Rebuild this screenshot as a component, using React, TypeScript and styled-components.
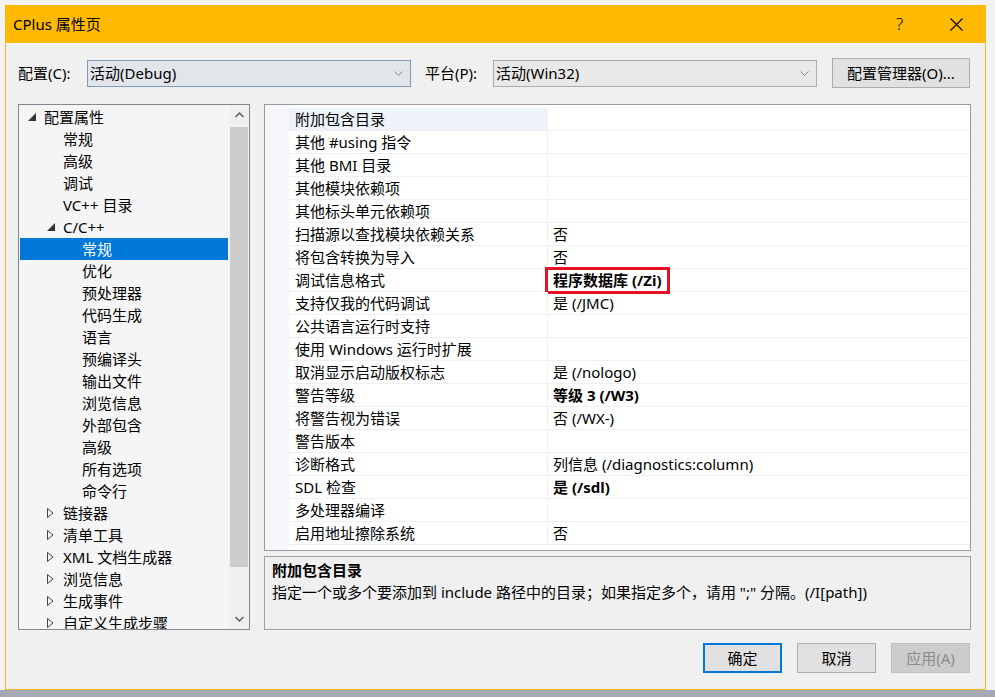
import React from 'react'
import styled, { createGlobalStyle } from 'styled-components'

const GlobalStyle = createGlobalStyle`
  html, body {
    margin: 0;
    padding: 0;
  }
  body {
    font-family: "Noto Sans", "Noto Sans CJK SC", sans-serif;
    font-size: 15px;
    color: #000;
    background: #f2f2f2;
  }
  * {
    box-sizing: border-box;
  }
`

const Screen = styled.div`
  width: 995px;
  height: 697px;
  padding: 5px 0 0 5px;
  overflow: hidden;
  background: linear-gradient(to bottom, #f2f2f2 0, #f2f2f2 690px, #a4a8b2 690px);
`

const Dialog = styled.div`
  width: 981px;
  height: 685px;
  border: 1px solid #f4b81c;
  border-top: none;
  background: #f0f0f0;
  display: flex;
  flex-direction: column;
`

const TitleBar = styled.div`
  height: 38px;
  flex-shrink: 0;
  background: #ffb900;
  display: flex;
  align-items: center;
  padding-left: 7px;
`

const Title = styled.div`
  flex: 1;
  font-size: 15px;
  line-height: 20px;
`

const TitleButton = styled.div`
  width: 57px;
  height: 38px;
  display: flex;
  align-items: center;
  justify-content: center;
  font-size: 17px;
  font-weight: 300;
  line-height: 20px;
`

const Content = styled.div`
  flex: 1;
  display: flex;
  flex-direction: column;
  padding: 15px 14px 0 12px;
`

const ConfigRow = styled.div`
  height: 30px;
  display: flex;
  align-items: center;
`

const FieldLabel = styled.div<{ $w: number; $ml?: number }>`
  width: ${(p) => p.$w}px;
  margin-left: ${(p) => p.$ml || 0}px;
  line-height: 20px;
`

const ComboBox = styled.div<{ $focused?: boolean }>`
  width: 324px;
  height: 27px;
  display: flex;
  align-items: center;
  justify-content: space-between;
  padding: 0 7px 0 2px;
  border: 1px solid ${(p) => (p.$focused ? '#7d9cbd' : '#acacac')};
  background: ${(p) => (p.$focused ? '#e2e6eb' : '#e8e8e8')};
  line-height: 20px;
`

const PushButton = styled.div<{ $w: number; $default?: boolean; $disabled?: boolean }>`
  width: ${(p) => p.$w}px;
  height: 30px;
  flex-shrink: 0;
  display: flex;
  align-items: center;
  justify-content: center;
  line-height: 20px;
  background: ${(p) => (p.$disabled ? '#cccccc' : '#e1e1e1')};
  color: ${(p) => (p.$disabled ? '#8a8a8a' : '#000')};
  border: ${(p) => (p.$default ? '2px solid #0078d7' : p.$disabled ? '1px solid #bfbfbf' : '1px solid #adadad')};
`

const ManagerButton = styled(PushButton)`
  margin-left: 15px;
`

const Main = styled.div`
  height: 526px;
  margin-top: 16px;
  display: flex;
  gap: 14px;
`

const Tree = styled.div`
  width: 232px;
  border: 1px solid #828790;
  background: #f5f5f5;
  display: flex;
`

const TreeList = styled.div`
  flex: 1;
  padding: 1px 1px 0;
  overflow: hidden;
`

const TreeRow = styled.div<{ $level: number; $selected?: boolean }>`
  height: 22px;
  display: flex;
  align-items: center;
  padding-left: ${(p) => 8 + p.$level * 19}px;
  line-height: 20px;
  white-space: nowrap;
  background: ${(p) => (p.$selected ? '#0078d7' : 'transparent')};
  color: ${(p) => (p.$selected ? '#fff' : '#000')};
`

const Toggle = styled.span`
  width: 16px;
  height: 22px;
  flex-shrink: 0;
  display: flex;
  align-items: center;
`

const ScrollBar = styled.div`
  width: 20px;
  display: flex;
  flex-direction: column;
  background: #f0f0f0;
`

const ScrollArrow = styled.div`
  height: 20px;
  display: flex;
  align-items: center;
  justify-content: center;
`

const ScrollTrack = styled.div`
  flex: 1;
  padding: 2px 1px 0 1px;
`

const ScrollThumb = styled.div`
  height: 440px;
  background: #cdcdcd;
`

const RightCol = styled.div`
  width: 707px;
  display: flex;
  flex-direction: column;
  gap: 5px;
`

const PropGrid = styled.div`
  height: 447px;
  border: 1px solid #9a9a9a;
  background: #fff;
  display: flex;
`

const Gutter = styled.div`
  width: 24px;
  background: #f5f7fa;
`

const PropRows = styled.div`
  flex: 1;
  padding-top: 3px;
`

const PropRow = styled.div`
  height: 23px;
  display: flex;
  border-bottom: 1px solid #eef0f4;
`

const NameCell = styled.div<{ $selected?: boolean }>`
  width: 259px;
  padding-left: 6px;
  border-right: 1px solid #eef0f4;
  background: ${(p) => (p.$selected ? '#eef3fa' : '#fff')};
  line-height: 22px;
  white-space: nowrap;
`

const ValueCell = styled.div<{ $bold?: boolean }>`
  flex: 1;
  display: flex;
  align-items: center;
  padding-left: 5px;
  line-height: 22px;
  white-space: nowrap;
  font-weight: ${(p) => (p.$bold ? 700 : 400)};
`

const Highlight = styled.span`
  display: inline-block;
  height: 21px;
  line-height: 21px;
  margin-left: -5px;
  padding: 0 6px 0 5px;
  outline: 3px solid #e81123;
`

const DescPanel = styled.div`
  flex: 1;
  border: 1px solid #a0a0a0;
  background: #f0f0f0;
  padding: 2px 7px;
`

const DescTitle = styled.div`
  font-weight: 700;
  line-height: 22px;
`

const DescText = styled.div`
  line-height: 22px;
  white-space: nowrap;
`

const Footer = styled.div`
  margin-top: 13px;
  display: flex;
  justify-content: flex-end;
  gap: 15px;
  padding-right: 1px;
`

const ExpandedIcon = () => (
  <svg width="8" height="8" viewBox="0 0 8 8">
    <polygon points="8,0 8,8 0,8" fill="#333" />
  </svg>
)

const CollapsedIcon = () => (
  <svg width="7" height="10" viewBox="0 0 7 10">
    <polygon points="0.5,0.5 6,5 0.5,9.5" fill="none" stroke="#444" strokeWidth="1" />
  </svg>
)

const Chevron = ({ up }: { up?: boolean }) => (
  <svg width="9" height="6" viewBox="0 0 9 6">
    <polyline
      points={up ? '0.5,5 4.5,1 8.5,5' : '0.5,1 4.5,5 8.5,1'}
      fill="none"
      stroke="#606060"
      strokeWidth="1.5"
    />
  </svg>
)

const ComboChevron = () => (
  <svg width="9" height="5" viewBox="0 0 9 5">
    <polyline points="0.5,0.5 4.5,4.5 8.5,0.5" fill="none" stroke="#888" strokeWidth="1" />
  </svg>
)

const CloseIcon = () => (
  <svg width="13" height="13" viewBox="0 0 13 13">
    <path d="M0.5 0.5 L12.5 12.5 M12.5 0.5 L0.5 12.5" stroke="#000" strokeWidth="1.1" />
  </svg>
)

type TreeItem = { label: string; level: number; toggle?: 'open' | 'closed'; selected?: boolean }

const treeItems: TreeItem[] = [
  { label: '配置属性', level: 0, toggle: 'open' },
  { label: '常规', level: 1 },
  { label: '高级', level: 1 },
  { label: '调试', level: 1 },
  { label: 'VC++ 目录', level: 1 },
  { label: 'C/C++', level: 1, toggle: 'open' },
  { label: '常规', level: 2, selected: true },
  { label: '优化', level: 2 },
  { label: '预处理器', level: 2 },
  { label: '代码生成', level: 2 },
  { label: '语言', level: 2 },
  { label: '预编译头', level: 2 },
  { label: '输出文件', level: 2 },
  { label: '浏览信息', level: 2 },
  { label: '外部包含', level: 2 },
  { label: '高级', level: 2 },
  { label: '所有选项', level: 2 },
  { label: '命令行', level: 2 },
  { label: '链接器', level: 1, toggle: 'closed' },
  { label: '清单工具', level: 1, toggle: 'closed' },
  { label: 'XML 文档生成器', level: 1, toggle: 'closed' },
  { label: '浏览信息', level: 1, toggle: 'closed' },
  { label: '生成事件', level: 1, toggle: 'closed' },
  { label: '自定义生成步骤', level: 1, toggle: 'closed' },
]

type Prop = { name: string; value?: string; bold?: boolean; marked?: boolean }

const props: Prop[] = [
  { name: '附加包含目录' },
  { name: '其他 #using 指令' },
  { name: '其他 BMI 目录' },
  { name: '其他模块依赖项' },
  { name: '其他标头单元依赖项' },
  { name: '扫描源以查找模块依赖关系', value: '否' },
  { name: '将包含转换为导入', value: '否' },
  { name: '调试信息格式', value: '程序数据库 (/Zi)', bold: true, marked: true },
  { name: '支持仅我的代码调试', value: '是 (/JMC)' },
  { name: '公共语言运行时支持' },
  { name: '使用 Windows 运行时扩展' },
  { name: '取消显示启动版权标志', value: '是 (/nologo)' },
  { name: '警告等级', value: '等级 3 (/W3)', bold: true },
  { name: '将警告视为错误', value: '否 (/WX-)' },
  { name: '警告版本' },
  { name: '诊断格式', value: '列信息 (/diagnostics:column)' },
  { name: 'SDL 检查', value: '是 (/sdl)', bold: true },
  { name: '多处理器编译' },
  { name: '启用地址擦除系统', value: '否' },
]

function App() {
  return (
    <Screen>
      <GlobalStyle />
      <Dialog>
        <TitleBar>
          <Title>CPlus 属性页</Title>
          <TitleButton>?</TitleButton>
          <TitleButton>
            <CloseIcon />
          </TitleButton>
        </TitleBar>
        <Content>
          <ConfigRow>
            <FieldLabel $w={69}>配置(C):</FieldLabel>
            <ComboBox $focused>
              <span>活动(Debug)</span>
              <ComboChevron />
            </ComboBox>
            <FieldLabel $w={68} $ml={14}>
              平台(P):
            </FieldLabel>
            <ComboBox>
              <span>活动(Win32)</span>
              <ComboChevron />
            </ComboBox>
            <ManagerButton $w={138}>配置管理器(O)...</ManagerButton>
          </ConfigRow>
          <Main>
            <Tree>
              <TreeList>
                {treeItems.map((item, i) => (
                  <TreeRow key={i} $level={item.level} $selected={item.selected}>
                    <Toggle>
                      {item.toggle === 'open' && <ExpandedIcon />}
                      {item.toggle === 'closed' && <CollapsedIcon />}
                    </Toggle>
                    {item.label}
                  </TreeRow>
                ))}
              </TreeList>
              <ScrollBar>
                <ScrollArrow>
                  <Chevron up />
                </ScrollArrow>
                <ScrollTrack>
                  <ScrollThumb />
                </ScrollTrack>
                <ScrollArrow>
                  <Chevron />
                </ScrollArrow>
              </ScrollBar>
            </Tree>
            <RightCol>
              <PropGrid>
                <Gutter />
                <PropRows>
                  {props.map((p, i) => (
                    <PropRow key={i}>
                      <NameCell $selected={i === 0}>{p.name}</NameCell>
                      <ValueCell $bold={p.bold}>
                        {p.marked ? <Highlight>{p.value}</Highlight> : p.value}
                      </ValueCell>
                    </PropRow>
                  ))}
                </PropRows>
              </PropGrid>
              <DescPanel>
                <DescTitle>附加包含目录</DescTitle>
                <DescText>
                  指定一个或多个要添加到 include 路径中的目录；如果指定多个，请用 ";" 分隔。(/I[path])
                </DescText>
              </DescPanel>
            </RightCol>
          </Main>
          <Footer>
            <PushButton $w={79} $default>
              确定
            </PushButton>
            <PushButton $w={79}>取消</PushButton>
            <PushButton $w={79} $disabled>
              应用(A)
            </PushButton>
          </Footer>
        </Content>
      </Dialog>
    </Screen>
  )
}

export default App
